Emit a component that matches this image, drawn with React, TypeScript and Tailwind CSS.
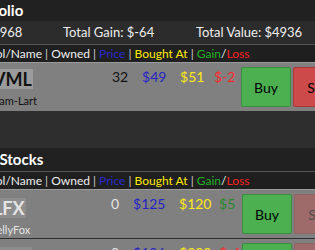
import React from "react";

type Stock = {
  sym: string;
  name: string;
  owned: number;
  price: number;
  bought: number;
};

const portfolio: Stock[] = [
  { sym: "VML", name: "Cam-Lart", owned: 32, price: 49, bought: 51 },
];

const stocks: Stock[] = [
  { sym: "LFX", name: "JellyFox", owned: 0, price: 125, bought: 120 },
  { sym: "BRQ", name: "Bramquist", owned: 0, price: 196, bought: 200 },
];

// column widths per table (symbol, owned, price, bought, gain)
const portfolioCols = ["w-[162px]", "w-[30px]", "w-[38px]", "w-[34px]", "w-[27px]"];
const stockCols = ["w-[161px]", "w-[22px]", "w-[46px]", "w-[40px]", "w-[23px]"];

function Title({ label, className }: { label: string; className: string }) {
  return (
    <div className={`flex items-center bg-[#212121] text-[15px] font-bold text-white ${className}`}>
      {label}
    </div>
  );
}

function Header() {
  return (
    <div className="flex h-[19px] items-center border-y border-t-[#555] border-b-[#9a9a9a] bg-[#1f1f1f] text-[12px] leading-[17px] text-[#eee] whitespace-pre">
      <span className="w-[92px] text-right">Symbol/Name</span>
      <span className="text-[#ccc]"> | </span>
      <span>Owned</span>
      <span className="text-[#ccc]"> | </span>
      <span className="text-[#2a2ad0]">Price</span>
      <span className="text-[#ccc]"> | </span>
      <span className="text-[#ffea00]">Bought At</span>
      <span className="text-[#ccc]"> | </span>
      <span className="text-[#22b322]">Gain</span>
      <span>/</span>
      <span className="text-[#ff2020]">Loss</span>
    </div>
  );
}

function StockRow({ s, cols }: { s: Stock; cols: string[] }) {
  const owned = s.owned > 0;
  const gain = s.price - s.bought;
  const ink = owned ? "text-[#111]" : "text-[#e4e4e4]";
  return (
    <div className="flex h-[49px] items-center border-b border-[#2e2e2e] bg-[#808080]">
      <div className={`${cols[0]} self-start pl-[42px] ${owned ? "pt-[5px]" : "pt-[7px]"} ${ink}`}>
        <span
          className={`inline-block px-[1px] text-[18px] font-bold leading-[20px] ${
            owned ? "bg-[#9b9b9b]" : "bg-[#8d8d8d]"
          }`}
        >
          {s.sym}
        </span>
        <div className="mt-[2px] text-[11px] leading-[13px]">{s.name}</div>
      </div>
      <div className={`${cols[1]} self-start pt-[6px] text-[14px] leading-[16px] ${ink}`}>
        {s.owned}
      </div>
      <div className={`${cols[2]} self-start pt-[6px] text-[14px] leading-[16px] text-[#2424c4]`}>
        ${s.price}
      </div>
      <div className={`${cols[3]} self-start pt-[6px] text-[14px] leading-[16px] text-[#ffe817]`}>
        ${s.bought}
      </div>
      <div
        className={`${cols[4]} self-start pt-[6px] text-[14px] leading-[16px] ${
          gain >= 0 ? "text-[#2a8a2a]" : "text-[#ff2b2b]"
        }`}
      >
        ${gain}
      </div>
      <div className="flex gap-[2px]">
        <button className="h-[40px] w-[50px] rounded-[2px] border border-[#3b8e3e] bg-[#4caf50] text-[14px] text-black">
          Buy
        </button>
        <button
          className={`h-[40px] w-[50px] rounded-[2px] border border-[#a83a3a] bg-[#cc4a4a] text-[14px] text-black ${
            owned ? "" : "opacity-40"
          }`}
        >
          Sell
        </button>
      </div>
    </div>
  );
}

export default function App() {
  return (
    <div className="h-[250px] w-[315px] overflow-hidden bg-[#2e2e2e] font-['Lato',sans-serif]">
      <div className="-ml-[50px] w-[420px]">
        <section>
          <Title label="Portfolio" className="h-[21px] pl-[15px]" />
          <div className="flex h-[23px] items-center whitespace-nowrap bg-[#2c2c2c] text-[13px] text-[#eee]">
            <span className="w-[113px] pr-[50px] text-right">Cash: $4968</span>
            <span className="w-[133px]">Total Gain: $-64</span>
            <span>Total Value: $4936</span>
          </div>
          <Header />
          {portfolio.map((s) => (
            <StockRow key={s.sym} s={s} cols={portfolioCols} />
          ))}
        </section>
        <section className="mt-[36px]">
          <Title label="Buy Stocks" className="h-[23px] pl-[20px]" />
          <Header />
          {stocks.map((s) => (
            <StockRow key={s.sym} s={s} cols={stockCols} />
          ))}
        </section>
      </div>
    </div>
  );
}
